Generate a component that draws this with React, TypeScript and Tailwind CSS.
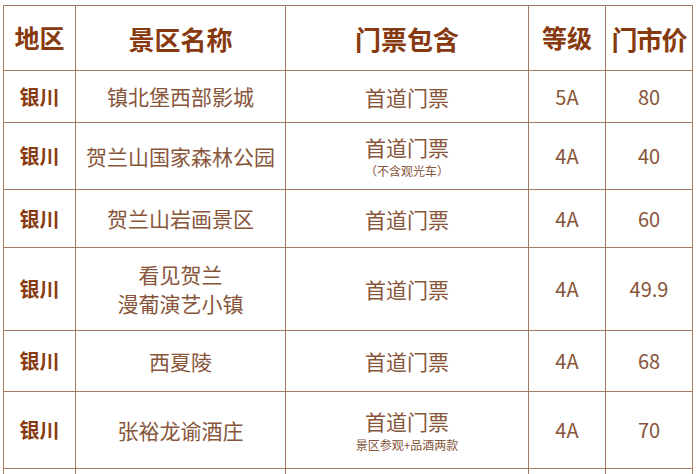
const rows = [
  { name: ["镇北堡西部影城"], ticket: "首道门票", note: "", level: "5A", price: "80", h: "h-[52px]" },
  { name: ["贺兰山国家森林公园"], ticket: "首道门票", note: "（不含观光车）", level: "4A", price: "40", h: "h-[67px]" },
  { name: ["贺兰山岩画景区"], ticket: "首道门票", note: "", level: "4A", price: "60", h: "h-[58px]" },
  { name: ["看见贺兰", "漫葡演艺小镇"], ticket: "首道门票", note: "", level: "4A", price: "49.9", h: "h-[83px]" },
  { name: ["西夏陵"], ticket: "首道门票", note: "", level: "4A", price: "68", h: "h-[61px]" },
  { name: ["张裕龙谕酒庄"], ticket: "首道门票", note: "景区参观+品酒两款", level: "4A", price: "70", h: "h-[77px]" },
];

const cell = "border border-[#a47a60] text-center align-middle p-0";

export default function App() {
  return (
    <div className="w-[697px] h-[474px] overflow-hidden bg-white pt-[5px] pl-[3px] font-['Noto_Sans_CJK_SC',sans-serif]">
      <table className="table-fixed border-collapse w-[689px]">
        <colgroup>
          <col className="w-[72px]" />
          <col className="w-[210px]" />
          <col className="w-[243px]" />
          <col className="w-[77px]" />
          <col className="w-[87px]" />
        </colgroup>
        <thead>
          <tr className="h-[65px] text-[26px] font-bold text-[#873a0f]">
            <th className={`${cell} text-[25px]`}>地区</th>
            <th className={cell}>景区名称</th>
            <th className={cell}>门票包含</th>
            <th className={`${cell} text-[25px]`}>等级</th>
            <th className={`${cell} tracking-[-1px]`}>门市价</th>
          </tr>
        </thead>
        <tbody className="text-[#87553a]">
          {rows.map((r, i) => (
            <tr key={i} className={r.h}>
              <td className={`${cell} text-[20px] font-bold text-[#873a0f]`}>银川</td>
              <td className={`${cell} text-[21px] leading-[29px]`}>
                {r.name.map((n) => (
                  <div key={n}>{n}</div>
                ))}
              </td>
              <td className={cell}>
                <div className={r.note ? "text-[21px] leading-[28px] mt-[2px]" : "text-[21px] leading-[28px]"}>{r.ticket}</div>
                {r.note && <div className="text-[12px] leading-[20px]">{r.note}</div>}
              </td>
              <td className={`${cell} text-[20px]`}>{r.level}</td>
              <td className={`${cell} text-[20px]`}>{r.price}</td>
            </tr>
          ))}
          <tr className="h-[60px]">
            <td className={cell}></td>
            <td className={cell}></td>
            <td className={cell}></td>
            <td className={cell}></td>
            <td className={cell}></td>
          </tr>
        </tbody>
      </table>
    </div>
  );
}
